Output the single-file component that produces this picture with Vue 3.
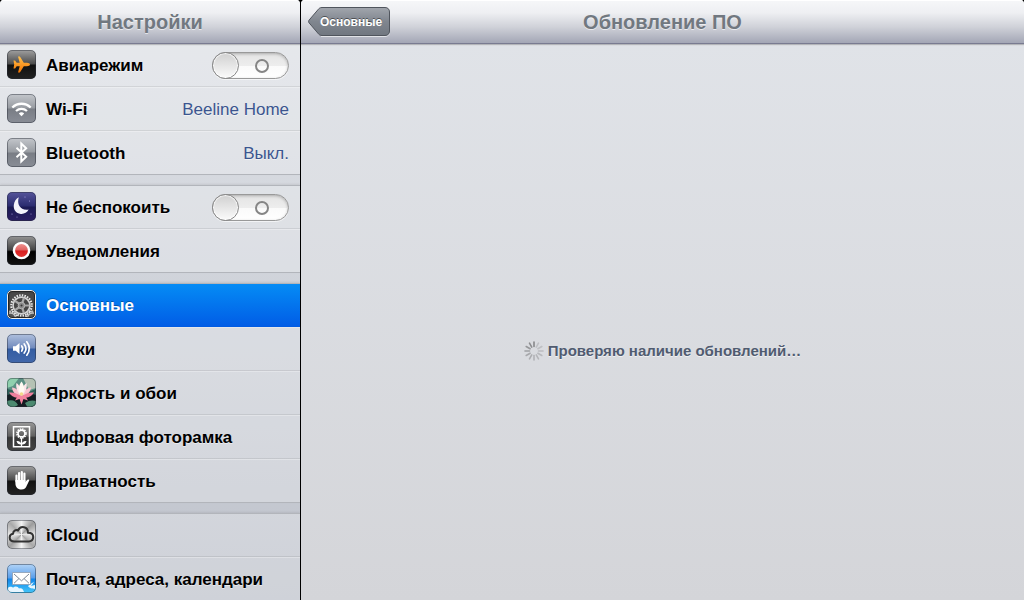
<script setup>
import { reactive } from 'vue';

const switches = reactive({ airplane: false, moon: false });

const groups = [
  [
    { icon: 'airplane', label: 'Авиарежим', toggle: true },
    { icon: 'wifi', label: 'Wi-Fi', value: 'Beeline Home' },
    { icon: 'bluetooth', label: 'Bluetooth', value: 'Выкл.' },
  ],
  [
    { icon: 'moon', label: 'Не беспокоить', toggle: true },
    { icon: 'notify', label: 'Уведомления' },
  ],
  [
    { icon: 'gear', label: 'Основные', active: true },
    { icon: 'sound', label: 'Звуки' },
    { icon: 'lotus', label: 'Яркость и обои' },
    { icon: 'frame', label: 'Цифровая фоторамка' },
    { icon: 'hand', label: 'Приватность' },
  ],
  [
    { icon: 'cloud', label: 'iCloud' },
    { icon: 'mail', label: 'Почта, адреса, календари' },
  ],
];

const spokes = [0.5, 0.16, 0.17, 0.18, 0.2, 0.22, 0.24, 0.27, 0.3, 0.34, 0.4, 0.46];
</script>

<template>
  <div class="settings">
    <aside class="sidebar">
      <header class="bar">
        <h1>Настройки</h1>
      </header>

      <nav class="menu">
        <ul v-for="(group, g) in groups" :key="g" class="group">
          <li v-for="item in group" :key="item.icon">
            <component
              :is="item.toggle ? 'label' : 'a'"
              :href="item.toggle ? undefined : '#' + item.icon"
              class="row"
              :class="{ active: item.active }"
            >
              <span class="icon" :class="item.icon">
                <svg viewBox="0 0 29 29" aria-hidden="true">
                  <g v-if="item.icon === 'airplane'">
                    <defs>
                      <linearGradient id="planeFill" x1="0" y1="0" x2="0" y2="1">
                        <stop offset="0" stop-color="#ffc04d" />
                        <stop offset="1" stop-color="#f57400" />
                      </linearGradient>
                    </defs>
                    <path fill="url(#planeFill)" d="M23 14.500c0 1-1.400 1.700-3 1.700h-3.200L12.900 22.500H11l1.700-6.200-3-.1-1.600 2.200H6.500l.7-3.900-.7-3.900h1.600l1.600 2.200 3-.1L11 6.500h1.900l3.900 6.300H20c1.600 0 3 .7 3 1.700z" />
                  </g>

                  <g v-else-if="item.icon === 'wifi'" fill="none" stroke="#fff" stroke-width="2.3">
                    <path d="M5.300 13.500c5.200-5 13.200-5 18.400 0" />
                    <path d="M9 17c3.200-2.900 7.800-2.900 11 0" />
                    <path fill="#fff" stroke="none" d="M11.800 19.400c1.600-1.400 3.800-1.400 5.400 0l-2.700 2.800z" />
                  </g>

                  <path
                    v-else-if="item.icon === 'bluetooth'"
                    d="M9.500 9.800l9.700 9-4.900 4.700V5.500l4.900 4.700-9.700 9"
                    fill="none"
                    stroke="#fff"
                    stroke-width="2"
                  />

                  <g v-else-if="item.icon === 'moon'">
                    <path fill="#f4f3fb" d="M11.800 5.300c-2.400 7.400 2.200 13.800 9.800 12.300-1.700 3.400-5.300 5-8.800 4.200C8.700 20.900 6.300 17.500 6.800 13c.4-3.500 2.300-6.200 5-7.700z" />
                    <g fill="#a9a3e0">
                      <circle cx="18" cy="5" r=".6" />
                      <circle cx="22.5" cy="9" r=".6" />
                      <circle cx="5" cy="22" r=".6" />
                      <circle cx="24" cy="22" r=".5" />
                      <circle cx="10" cy="25" r=".5" />
                    </g>
                  </g>

                  <g v-else-if="item.icon === 'notify'">
                    <defs>
                      <linearGradient id="redFill" x1="0" y1="0" x2="0" y2="1">
                        <stop offset="0" stop-color="#f29a98" />
                        <stop offset=".48" stop-color="#e0605e" />
                        <stop offset=".52" stop-color="#d81f1f" />
                        <stop offset="1" stop-color="#e53a36" />
                      </linearGradient>
                    </defs>
                    <circle cx="14.5" cy="14.5" r="7.6" fill="url(#redFill)" stroke="#fff" stroke-width="2.4" />
                  </g>

                  <g v-else-if="item.icon === 'gear'">
                    <circle cx="14.5" cy="15.5" r="10.2" fill="none" stroke="#e8e8e8" stroke-width="2.2" stroke-dasharray="1.5 1.17" />
                    <circle cx="14.5" cy="15.5" r="8.4" fill="#454545" stroke="#d2d2d2" stroke-width="1.6" />
                    <path
                      v-for="n in 5"
                      :key="n"
                      d="M14.500 15.500v-8"
                      stroke="#a8a8a8"
                      stroke-width="2.2"
                      :transform="`rotate(${n * 72 + 18} 14.5 15.5)`"
                    />
                    <circle cx="14.5" cy="15.5" r="3.3" fill="#8a8a8a" stroke="#b5b5b5" />
                    <circle cx="14.5" cy="15.5" r="1" fill="#333" />
                    <g fill="#555" stroke="#e4e4e4" stroke-width="2" stroke-dasharray="1.5 1.1">
                      <circle cx="3.5" cy="28" r="6.5" />
                      <circle cx="25.5" cy="28" r="6.5" />
                    </g>
                    <g fill="#555" stroke="#c4c4c4" stroke-width="1.4">
                      <circle cx="3.5" cy="28" r="5" />
                      <circle cx="25.5" cy="28" r="5" />
                    </g>
                  </g>

                  <g v-else-if="item.icon === 'sound'">
                    <path fill="#fff" d="M6 12.300h2.700l3.800-3.300v11l-3.800-3.300H6z" />
                    <g fill="none" stroke="#fff" stroke-width="1.7" stroke-linecap="round">
                      <path d="M14.700 12c1.200 1.600 1.200 3.400 0 5" />
                      <path d="M17.200 9.900c2.200 2.900 2.200 6.300 0 9.200" />
                      <path d="M19.800 7.800c3.200 4.200 3.200 9.200 0 13.400" />
                    </g>
                  </g>

                  <g v-else-if="item.icon === 'lotus'">
                    <path fill="#8fd0ae" d="M0 0h12L6 8 0 10z" />
                    <path fill="#b5c2b4" d="M16 0h13v10l-7 2z" />
                    <path fill="#2c5f57" d="M0 11l9 2 10 2 10-4v7H0z" />
                    <path fill="#141d22" d="M0 17l8-2 6 5 8-5 7 2v12H0z" />
                    <path fill="#4c8a70" d="M0 23c5-2 9 0 11 4l-5 3H0zM18 25c4-3 8-3 11-2v4l-8 3z" />
                    <path fill="#f9c3cf" d="M14.500 18C9 18 5.500 14 5 9.500c4 .5 7.500 3 9.500 8.500zM14.500 18c5.500 0 9-4 9.500-8.500-4 .5-7.500 3-9.500 8.500z" />
                    <path fill="#ef7f9d" d="M14.500 18.500C10 15 6 14 2 14.500c3 5 7.500 6.500 12.500 4zM14.500 18.500c4.500-3.500 8.500-4.500 12.500-4-3 5-7.500 6.500-12.500 4z" />
                    <path fill="#fce6ea" d="M14.500 18C10 14 8.500 9 9.500 5c3.500 2.500 5 7 5 13zM14.500 18c4.500-4 6-9 5-13-3.500 2.500-5 7-5 13z" />
                    <path fill="#fffaf2" d="M14.500 18c-3.500-5-3.500-10 0-14.500 3.500 4.500 3.500 9.500 0 14.500z" />
                    <path fill="#f4849f" d="M11 17.500h7l3 5-4.500-1.500-2 5.500-2-5.500L8 22.500z" />
                    <circle cx="14.5" cy="16" r="1.8" fill="#f4d98a" />
                  </g>

                  <g v-else-if="item.icon === 'frame'" fill="none" stroke="#fff">
                    <path stroke-width="1.5" d="M6.500 4.700h16v20.100h-16z" />
                    <circle cx="14.5" cy="11.5" r="4.5" stroke-width="1.6" stroke-dasharray="1.5 .86" />
                    <circle cx="14.5" cy="11.5" r="3.4" stroke-width="1.6" />
                    <path stroke-width="1.3" d="M14.500 16v8" />
                    <path fill="#fff" stroke="none" d="M14.500 22.500c-2.500.3-4.500-.9-5-3.500 2.800-.3 4.500 1 5 3.500zM14.500 22.500c2.500.3 4.500-.9 5-3.500-2.800-.3-4.500 1-5 3.500z" />
                  </g>

                  <g v-else-if="item.icon === 'hand'">
                    <path
                      d="M9.500 9.500v6M12.100 7v8M14.800 6v9M17.400 7.500v8"
                      stroke="#fff"
                      stroke-width="2.2"
                      stroke-linecap="round"
                    />
                    <path fill="#fff" d="M8.400 14h10.100v2.300c.8-1.900 1.700-3 3.100-2.800.8.100.8.800.4 1.500l-2.300 4.700c-.8 2-2.100 3.800-5.300 3.800-4 0-6-2.500-6-6.500z" />
                  </g>

                  <path
                    v-else-if="item.icon === 'cloud'"
                    d="M7.500 21.500c-3 0-4.800-1.700-4.800-4 0-2.200 1.500-3.600 3.400-3.800-.2-2.800 2.700-4.400 4.900-3.200 2.600-5.600 10.200-3.800 9.900 2.300 3.300 0 5.300 1.700 5.300 4.300s-1.800 4.400-4.700 4.400z"
                    fill="none"
                    stroke="#333"
                    stroke-width="2"
                    stroke-linejoin="round"
                  />

                  <g v-else>
                    <path fill="#e7f6ff" d="M1 24c2-2 4-1 5-.3 2-2 5-1.500 6 .8 3-1 4 1 5 3.500H1zM21 22c2-1 3-3 6-4l-3 4 4-1v4c-3-1-5 0-7-3z" />
                    <path fill="#fff" stroke="#8b9cb0" stroke-width=".8" d="M5.500 8.500h18v12h-18z" />
                    <path fill="none" stroke="#7d8998" stroke-width="1" d="M7 10l7.500 6.800L22 10M7 19.300l5-4.800M22 19.300l-5-4.800" />
                  </g>
                </svg>
              </span>
              <span class="label">{{ item.label }}</span>
              <input
                v-if="item.toggle"
                v-model="switches[item.icon]"
                type="checkbox"
                role="switch"
                class="switch"
              />
              <span v-if="item.value" class="value">{{ item.value }}</span>
            </component>
          </li>
        </ul>
      </nav>
    </aside>

    <main class="detail">
      <header class="bar">
        <button type="button" class="back">
          <svg viewBox="0 0 82 30" aria-hidden="true">
            <defs>
              <linearGradient id="backFill" x1="0" y1="0" x2="0" y2="1">
                <stop offset="0" stop-color="#a2a6ad" />
                <stop offset=".5" stop-color="#80868f" />
                <stop offset="1" stop-color="#717780" />
              </linearGradient>
            </defs>
            <path d="M13 29.500h64c2.500 0 4.500-1.500 4.500-4" fill="none" stroke="#fff" stroke-opacity=".6" />
            <path
              d="M14 .5h63c2.800 0 4.500 1.700 4.500 4.500v19c0 2.800-1.700 4.500-4.500 4.500H14c-2 0-3-.9-4.100-2.300L1.200 16c-.9-1-.9-2 0-3L9.900 2.800C11 1.400 12 .5 14 .5z"
              fill="url(#backFill)"
              stroke="#50555d"
            />
          </svg>
          <span>Основные</span>
        </button>
        <h2>Обновление ПО</h2>
      </header>

      <p class="status" role="status">
        <svg class="spinner" viewBox="0 0 20 20" aria-hidden="true">
          <path
            v-for="(opacity, i) in spokes"
            :key="i"
            d="M10 1v4.500"
            stroke="#333"
            stroke-width="1.6"
            stroke-linecap="round"
            :stroke-opacity="opacity"
            :transform="`rotate(${i * 30} 10 10)`"
          />
        </svg>
        <span>Проверяю наличие обновлений…</span>
      </p>
    </main>
  </div>
</template>

<style>
body {
  margin: 0;
  background: #000;
}
</style>

<style scoped>
.settings {
  display: grid;
  grid-template-columns: 300px 1fr;
  gap: 1px;
  height: 100vh;
  overflow: hidden;
  background: #000;
  font-family: "Liberation Sans", Arial, Helvetica, sans-serif;
}

.sidebar,
.detail {
  min-width: 0;
  overflow: hidden;
  border-radius: 4px 4px 0 0;
}

.sidebar {
  background: linear-gradient(#dfe2e7, #bfc3cc);
}

.detail {
  background: linear-gradient(#e1e4e9, #d4d5d9);
}

.bar {
  position: relative;
  z-index: 1;
  display: flex;
  align-items: center;
  justify-content: center;
  box-sizing: border-box;
  height: 44px;
  border-bottom: 1px solid #797b91;
  background: linear-gradient(#f6f7f9, #eeeff2 30%, #d0d2d9 62%, #a3a6b5);
  box-shadow: inset 0 1px #fff, 0 1px 1px rgba(0, 0, 0, 0.2);
}

.bar h1,
.bar h2 {
  margin: 0;
  color: #717880;
  font-size: 20px;
  line-height: 24px;
  text-shadow: 0 1px rgba(255, 255, 255, 0.6);
}

.back {
  position: absolute;
  top: 7px;
  left: 7px;
  width: 82px;
  height: 29px;
  padding: 0 8px 0 12px;
  border: none;
  background: none;
  color: #fff;
  font: bold 12px/28px "Liberation Sans", Arial, sans-serif;
  text-shadow: 0 -1px rgba(0, 0, 0, 0.45);
  white-space: nowrap;
  cursor: pointer;
}

.back svg {
  position: absolute;
  top: 0;
  left: 0;
  width: 82px;
  height: 30px;
}

.back span {
  position: relative;
}

/* Menu */
.menu {
  display: flex;
  flex-direction: column;
  gap: 10px;
  margin-top: -1px;
}

.group {
  margin: 0;
  padding: 0;
  list-style: none;
  background: rgba(255, 255, 255, 0.25);
  box-shadow: 0 -1px 2px rgba(0, 0, 0, 0.08);
}

.row {
  display: flex;
  align-items: flex-start;
  box-sizing: border-box;
  height: 44px;
  padding: 6px 11px 0 7px;
  border-top: 1px solid rgba(255, 255, 255, 0.3);
  border-bottom: 1px solid rgba(0, 0, 0, 0.08);
  color: #000;
  font-size: 17px;
  line-height: 32px;
  text-decoration: none;
  text-shadow: 0 1px rgba(255, 255, 255, 0.5);
}

.group li:first-child .row {
  border-top-color: #b2b5bb;
}

.group li:last-child .row {
  border-bottom-color: #b2b5bb;
}

.group .row.active {
  border-top-color: #0778dc;
  border-bottom-color: #005be3;
  background: linear-gradient(#058cf5, #015de6);
  color: #fff;
  text-shadow: 0 -1px rgba(0, 0, 0, 0.3);
}

.label {
  flex: 1;
  margin-left: 10px;
  font-weight: bold;
  white-space: nowrap;
}

.value {
  color: #3b558f;
}

.switch {
  position: relative;
  appearance: none;
  flex: none;
  width: 77px;
  height: 27px;
  margin: 2px 0 0;
  border: 1px solid #999;
  border-radius: 14px;
  background: linear-gradient(#e4e4e4, #ededed 50%, #fafafa 52%, #fff);
  box-shadow: inset 0 1px 3px rgba(0, 0, 0, 0.25), 0 1px rgba(255, 255, 255, 0.6);
  cursor: pointer;
}

.switch::before {
  content: "";
  position: absolute;
  top: -1px;
  left: -1px;
  box-sizing: border-box;
  width: 27px;
  height: 27px;
  border: 1px solid #888;
  border-radius: 50%;
  background: linear-gradient(#d0d0d0, #fbfbfb);
  box-shadow: inset 0 0 1px 1px rgba(255, 255, 255, 0.8);
}

.switch::after {
  content: "";
  position: absolute;
  top: 6px;
  left: 42px;
  box-sizing: border-box;
  width: 14px;
  height: 14px;
  border: 2px solid #858585;
  border-radius: 50%;
}

.switch:checked::before {
  left: 49px;
}

.switch:checked::after {
  left: 18px;
  width: 2px;
}

/* Icon tiles */
.icon {
  position: relative;
  flex: none;
  width: 29px;
  height: 29px;
  overflow: hidden;
  border-radius: 5px;
}

.icon svg {
  display: block;
  width: 29px;
  height: 29px;
}

.icon::after {
  content: "";
  position: absolute;
  inset: 0;
  border: 1px solid rgba(40, 45, 55, 0.45);
  border-radius: 5px;
}

.airplane,
.hand {
  background: linear-gradient(#a0a0a0, #4c4c4c 48%, #111 52%, #222);
}

.notify {
  background: linear-gradient(#959595, #454545 48%, #000 54%, #111);
}

.wifi,
.bluetooth {
  background: linear-gradient(#c4c7cc, #989ca2 48%, #797d85 52%, #898d96);
}

.moon {
  background: linear-gradient(#55549a, #2b2c70 48%, #1b1a55 52%, #2c1f63);
}

.gear {
  background: #484848;
}

.gear::after {
  border-color: #ededed;
  box-shadow: inset 0 0 1px 1px #222;
}

.sound {
  background: linear-gradient(#b0c0de, #718bbd 48%, #345da2 52%, #4268ab);
}

.lotus {
  background: #5b8f83;
}

.frame {
  background: linear-gradient(#999, #626262 48%, #373737 54%, #444);
}

.cloud {
  background: conic-gradient(#f3f3f3, #9c9c9c, #e5e5e5, #a8a8a8, #f3f3f3, #a2a2a2, #e8e8e8, #aaa, #f3f3f3);
}

.mail {
  background: linear-gradient(#b2d4f7, #5a9eea 48%, #1286ea 52%, #45c7fa);
}

/* Update check */
.status {
  display: flex;
  align-items: center;
  justify-content: center;
  gap: 4px;
  margin: 297px 0 0;
  color: #505b70;
  font-size: 15px;
  font-weight: bold;
  line-height: 20px;
  text-shadow: 0 1px rgba(255, 255, 255, 0.6);
}

.spinner {
  width: 20px;
  height: 20px;
}
</style>
